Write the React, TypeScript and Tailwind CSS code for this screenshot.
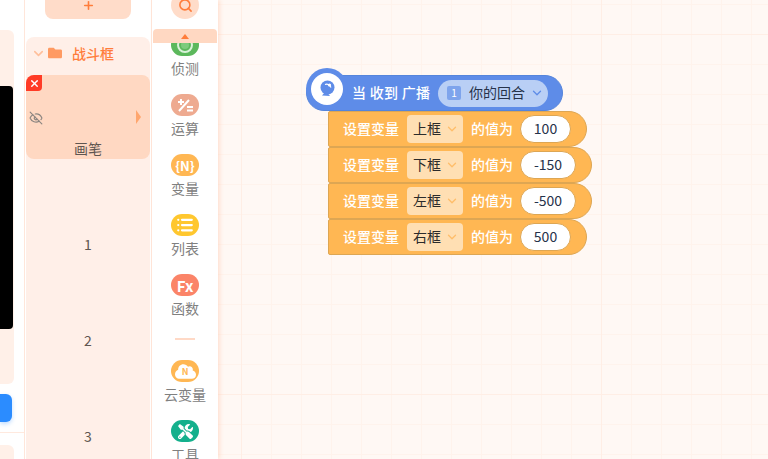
import { ChevronDown, EyeOff, List, Plus, Search, X } from 'lucide-react';
import { FaCloud, FaFolder, FaTools } from 'react-icons/fa';
import type { ReactNode } from 'react';

const FONT = "font-['Noto_Sans_CJK_SC','Noto_Sans',sans-serif]";

const SET_BLOCKS = [
  { name: '上框', value: '100', pill: 'w-[51px]', width: 'w-[259px]' },
  { name: '下框', value: '-150', pill: 'w-[56px]', width: 'w-[264px]' },
  { name: '左框', value: '-500', pill: 'w-[56px]', width: 'w-[264px]' },
  { name: '右框', value: '500', pill: 'w-[51px]', width: 'w-[259px]' },
];

function Category({ label, color, children }: { label: string; color: string; children: ReactNode }) {
  return (
    <div className="flex h-[60px] shrink-0 flex-col items-center">
      <div className={`flex h-[22px] w-[28px] shrink-0 items-center justify-center rounded-full text-white ${color}`}>
        {children}
      </div>
      <span className="whitespace-nowrap text-[14px] leading-[24px] text-[#808080]">{label}</span>
    </div>
  );
}

function SpriteItem({ label, active }: { label: string; active?: boolean }) {
  return (
    <div className={`relative mb-3 flex h-[84px] shrink-0 items-end justify-center rounded-lg pb-px ${active ? 'bg-[#ffd8c2]' : ''}`}>
      <span className="text-[14px] leading-5 text-[#5f5651]">{label}</span>
      {active && (
        <>
          <div className="absolute left-0 top-0 flex h-4 w-4 items-center justify-center rounded-tl-lg rounded-br-[4px] bg-[#ff3b26] text-white">
            <X size={11} strokeWidth={3} />
          </div>
          <EyeOff size={14} className="absolute left-[3px] top-[36px] text-[#8c8580]" />
          <div className="absolute right-[9px] top-[35px] h-0 w-0 border-y-[7px] border-l-[5px] border-y-transparent border-l-[#ffa66e]" />
        </>
      )}
    </div>
  );
}

function SetBlock({ name, value, pill, width }: { name: string; value: string; pill: string; width: string }) {
  return (
    <div className={`flex h-9 items-center rounded-r-[18px] rounded-l-[2px] border border-[#dda653] bg-[#ffb753] pl-[14px] ${width}`}>
      <span className="w-[64px] pb-[2px] text-[14px] font-medium text-white">设置变量</span>
      <div className="flex h-7 w-14 items-center rounded bg-[#ffdfb3] pb-px pl-[6px] text-[14px] text-[#2b2b2b]">
        {name}
        <ChevronDown size={14} strokeWidth={2.25} className="ml-[4px] text-[#ffbe6a]" />
      </div>
      <span className="ml-2 w-[50px] pb-[2px] text-[14px] font-medium text-white">的值为</span>
      <div className={`-ml-px flex h-7 items-center justify-center rounded-full border border-[#dda653] bg-white pb-px text-[14px] text-[#26324a] ${pill}`}>
        {value}
      </div>
    </div>
  );
}

export default function App() {
  return (
    <div className={`flex h-[459px] w-[768px] overflow-hidden bg-[#fff8f4] ${FONT}`}>
      {/* stage column */}
      <div className="flex w-6 shrink-0 flex-col bg-white">
        <div className="mt-[30px] flex h-[354px] w-[14px] shrink-0 flex-col rounded-r-md bg-[#fff0e8] pt-[56px]">
          <div className="h-[243px] w-[13px] shrink-0 rounded-r bg-black" />
        </div>
        <div className="mt-[10px] h-7 w-[12px] shrink-0 rounded-r-md bg-[#2b8cff] shadow-[0_2px_4px_rgba(43,140,255,0.3)]" />
        <div className="mt-[10px] h-px w-full shrink-0 bg-[#ffe9de]" />
        <div className="mt-3 h-5 w-[14px] shrink-0 rounded-r-md bg-[#fff0e8]" />
      </div>

      {/* sprite list */}
      <div className="flex w-[128px] shrink-0 flex-col border-x border-[#ffe6da] bg-white px-px">
        <div className="flex h-[37px] shrink-0 justify-center">
          <div className="flex h-[19px] w-[86px] justify-center rounded-b-lg bg-[#ffdcc9] text-[#ff7d3b]">
            <Plus size={13} strokeWidth={3} className="-mt-[1px]" />
          </div>
        </div>
        <div className="flex flex-1 flex-col rounded-t-lg bg-[#ffefe8]">
          <div className="flex h-[38px] shrink-0 items-center pb-[6px] pl-[5px]">
            <ChevronDown size={15} strokeWidth={2.5} className="text-[#ffbf9b]" />
            <FaFolder size={14} className="ml-[2px] text-[#ff9a62]" />
            <span className="ml-[10px] text-[14px] font-medium text-[#ff7d3b]">战斗框</span>
          </div>
          <SpriteItem label="画笔" active />
          <SpriteItem label="1" />
          <SpriteItem label="2" />
          <SpriteItem label="3" />
        </div>
      </div>

      {/* block categories */}
      <div className="relative z-10 flex w-[66px] shrink-0 flex-col items-center bg-white shadow-[2px_0_4px_rgba(255,200,170,0.45)]">
        <div className="-mt-[9px] mb-[15px] flex h-7 w-7 shrink-0 items-center justify-center rounded-full bg-[#ffdcc9] text-[#ff7d3b]">
          <Search size={15} strokeWidth={2.5} />
        </div>
        <Category label="侦测" color="bg-[#5cb85c]">
          <div className="flex h-[16px] w-[16px] items-center justify-center rounded-full border-2 border-[#d9f2d9]">
            <div className="h-[8px] w-[8px] rounded-full bg-[#7ccb7c]" />
          </div>
        </Category>
        <Category label="运算" color="bg-[#eeaa90]">
          <svg width="20" height="16" viewBox="0 0 20 16" fill="none" stroke="white" strokeWidth="2">
            <path d="M3 5h6M6 2v6M4 14L14 3M12 10h6M12 13.5h6" />
          </svg>
        </Category>
        <Category label="变量" color="bg-[#ffb753]">
          <span className="text-[13px] font-bold leading-none">{'{N}'}</span>
        </Category>
        <Category label="列表" color="bg-[#ffc72e]">
          <List size={18} strokeWidth={3} />
        </Category>
        <Category label="函数" color="bg-[#fb8468]">
          <span className="text-[15px] font-bold leading-none">Fx</span>
        </Category>
        <div className="mb-5 mt-1 h-[2px] w-5 shrink-0 bg-[#ffd9c6]" />
        <Category label="云变量" color="bg-[#ffb753]">
          <div className="relative flex items-center justify-center">
            <FaCloud size={21} />
            <span className="absolute top-[6px] text-[9px] font-bold leading-none text-[#ffb753]">N</span>
          </div>
        </Category>
        <Category label="工具" color="bg-[#14b08c]">
          <FaTools size={15} />
        </Category>
        <div className="absolute left-px top-[29px] flex h-[14px] w-[64px] justify-center rounded-t-sm bg-[#ffd8c2] pt-[5px]">
          <div className="h-0 w-0 border-x-[4px] border-b-[5px] border-x-transparent border-b-[#ff7d3b]" />
        </div>
      </div>

      {/* workspace */}
      <div className="relative flex-1 overflow-hidden bg-[#fff8f4] bg-[linear-gradient(#ffeee5_1px,transparent_1px),linear-gradient(90deg,#ffeee5_1px,transparent_1px),linear-gradient(#fff3ec_1px,transparent_1px),linear-gradient(90deg,#fff3ec_1px,transparent_1px)] bg-[length:360px_360px,360px_360px,30px_30px,30px_30px] bg-[position:0_34px,23px_0,0_4px,23px_0]">
        <div className="absolute left-[110px] top-[68px] flex flex-col">
          <div className="relative -ml-[22px] flex h-[36px] w-[257px] translate-y-[7px] items-center rounded-[18px] border border-[#5585dc] bg-[#5e8ce8] pl-[45px]">
            <div className="absolute -left-px -top-[8px] flex h-[42px] w-[42px] items-center justify-center rounded-full bg-[#5e8ce8]">
              <div className="flex h-8 w-8 items-center justify-center rounded-full bg-white">
                <svg width="20" height="20" viewBox="0 0 20 20">
                  <circle cx="10.5" cy="8.5" r="7" fill="#5e8ce8" />
                  <path d="M5 16.5L9 12l4 5z" fill="#5e8ce8" />
                  <path d="M8 5.5c2.5-1 5 .5 6 3" fill="none" stroke="white" strokeWidth="1.2" />
                  <circle cx="12.5" cy="6" r="1.6" fill="white" />
                </svg>
              </div>
            </div>
            <span className="w-[86px] whitespace-nowrap pb-[2px] text-[14px] font-medium tracking-[0.3px] text-white">当 收到 广播</span>
            <div className="flex h-[27px] w-[110px] items-center rounded-full bg-[#b9cff5] pb-px pl-[9px] text-[14px] text-[#26324a]">
              <div className="flex h-[14px] w-[14px] items-center justify-center rounded-[2px] bg-[#7ea4ec] text-[10px] leading-none text-white">1</div>
              <span className="ml-2">你的回合</span>
              <ChevronDown size={14} strokeWidth={2.25} className="ml-[5px] text-[#5e8ce8]" />
            </div>
          </div>
          <div className="mt-[7px] flex flex-col">
            {SET_BLOCKS.map((b) => (
              <SetBlock key={b.name} {...b} />
            ))}
          </div>
        </div>
      </div>
    </div>
  );
}
